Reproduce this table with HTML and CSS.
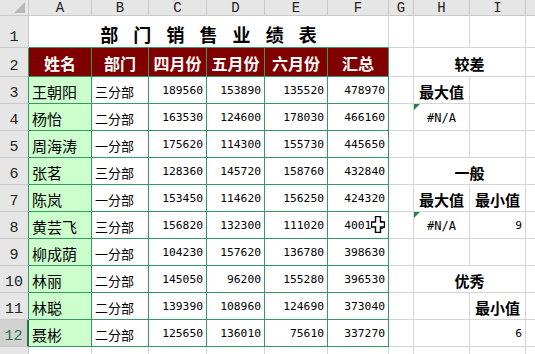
FILE: index.html
```html
<!DOCTYPE html>
<html lang="zh">
<head>
<meta charset="utf-8">
<title>部门销售业绩表</title>
<link rel="stylesheet" href="styles.css">
</head>
<body>
<div class="sheet">
  <div class="ch corner"></div>
  <div class="ch">A</div><div class="ch">B</div><div class="ch">C</div><div class="ch">D</div><div class="ch">E</div><div class="ch">F</div><div class="ch">G</div><div class="ch">H</div><div class="ch">I</div><div class="ch"></div>

  <div class="rh">1</div>
  <div class="c title">部 门 销 售 业 绩 表</div>
  <div class="c"></div><div class="c"></div><div class="c"></div><div class="c"></div>

  <div class="rh rg">2</div>
  <div class="c t hd">姓名</div><div class="c t hd">部门</div><div class="c t hd">四月份</div><div class="c t hd">五月份</div><div class="c t hd">六月份</div><div class="c t hd">汇总</div>
  <div class="c"></div><div class="c lbl span2">较差</div><div class="c"></div>

  <div class="rh rg">3</div>
  <div class="c t nm">王朝阳</div><div class="c t dp">三分部</div><div class="c t num">189560</div><div class="c t num">153890</div><div class="c t num">135520</div><div class="c t num">478970</div>
  <div class="c"></div><div class="c lbl">最大值</div><div class="c"></div><div class="c"></div>

  <div class="rh rg">4</div>
  <div class="c t nm">杨怡</div><div class="c t dp">二分部</div><div class="c t num">163530</div><div class="c t num">124600</div><div class="c t num">178030</div><div class="c t num">466160</div>
  <div class="c"></div><div class="c err">#N/A</div><div class="c"></div><div class="c"></div>

  <div class="rh rg">5</div>
  <div class="c t nm">周海涛</div><div class="c t dp">一分部</div><div class="c t num">175620</div><div class="c t num">114300</div><div class="c t num">155730</div><div class="c t num">445650</div>
  <div class="c"></div><div class="c"></div><div class="c"></div><div class="c"></div>

  <div class="rh rg">6</div>
  <div class="c t nm">张茗</div><div class="c t dp">三分部</div><div class="c t num">128360</div><div class="c t num">145720</div><div class="c t num">158760</div><div class="c t num">432840</div>
  <div class="c"></div><div class="c lbl span2">一般</div><div class="c"></div>

  <div class="rh rg">7</div>
  <div class="c t nm">陈岚</div><div class="c t dp">一分部</div><div class="c t num">153450</div><div class="c t num">114620</div><div class="c t num">156250</div><div class="c t num">424320</div>
  <div class="c"></div><div class="c lbl">最大值</div><div class="c lbl">最小值</div><div class="c"></div>

  <div class="rh rg">8</div>
  <div class="c t nm">黄芸飞</div><div class="c t dp">三分部</div><div class="c t num">156820</div><div class="c t num">132300</div><div class="c t num">111020</div><div class="c t num">400140</div>
  <div class="c"></div><div class="c err">#N/A</div><div class="c num">9</div><div class="c"></div>

  <div class="rh rg">9</div>
  <div class="c t nm">柳成荫</div><div class="c t dp">一分部</div><div class="c t num">104230</div><div class="c t num">157620</div><div class="c t num">136780</div><div class="c t num">398630</div>
  <div class="c"></div><div class="c"></div><div class="c"></div><div class="c"></div>

  <div class="rh rg">10</div>
  <div class="c t nm">林丽</div><div class="c t dp">二分部</div><div class="c t num">145050</div><div class="c t num">96200</div><div class="c t num">155280</div><div class="c t num">396530</div>
  <div class="c"></div><div class="c lbl span2">优秀</div><div class="c"></div>

  <div class="rh rg">11</div>
  <div class="c t nm">林聪</div><div class="c t dp">二分部</div><div class="c t num">139390</div><div class="c t num">108960</div><div class="c t num">124690</div><div class="c t num">373040</div>
  <div class="c"></div><div class="c"></div><div class="c lbl">最小值</div><div class="c"></div>

  <div class="rh rg active">12</div>
  <div class="c t nm">聂彬</div><div class="c t dp">二分部</div><div class="c t num">125650</div><div class="c t num">136010</div><div class="c t num">75610</div><div class="c t num">337270</div>
  <div class="c"></div><div class="c"></div><div class="c num">6</div><div class="c"></div>

  <div class="rh"></div>
  <div class="c"></div><div class="c"></div><div class="c"></div><div class="c"></div><div class="c"></div><div class="c"></div><div class="c"></div><div class="c"></div><div class="c"></div><div class="c"></div>

  <svg class="cursor" width="14" height="17" viewBox="0 0 14 17">
    <polygon points="4.5,0.5 9.5,0.5 9.5,6 13.5,6 13.5,11 9.5,11 9.5,16.5 4.5,16.5 4.5,11 0.5,11 0.5,6 4.5,6" fill="#fff" stroke="#000" stroke-width="1.4"/>
  </svg>
</div>
</body>
</html>
```
FILE: styles.css
```css
html, body {
  margin: 0;
  padding: 0;
  background: #fff;
  overflow: hidden;
}
.sheet {
  position: relative;
  display: grid;
  grid-template-columns: 29px 63px 57px 58px 58px 63px 61px 25px 56px 56px 56px;
  grid-template-rows: 16px 32px 29px repeat(11, 27px);
  width: 535px;
  height: 354px;
  overflow: hidden;
  font-family: "Noto Sans CJK SC", "Noto Sans", sans-serif;
  color: #000;
}
.sheet > div {
  box-sizing: border-box;
  display: flex;
  align-items: center;
  overflow: hidden;
  white-space: nowrap;
  min-width: 0;
}
.ch {
  background: #e6e6e6;
  border-right: 1px solid #c9c9c9;
  border-bottom: 1px solid #c9c9c9;
  justify-content: center;
  font-family: "Liberation Mono", monospace;
  font-size: 14px;
  color: #222;
  padding-top: 1px;
}
.corner {
  position: relative;
}
.corner::after {
  content: "";
  position: absolute;
  right: 3px;
  bottom: 2px;
  width: 0;
  height: 0;
  border-left: 11px solid transparent;
  border-bottom: 11px solid #b9b9b9;
}
.rh {
  background: #e6e6e6;
  border-right: 1px solid #c9c9c9;
  border-bottom: 1px solid #c9c9c9;
  justify-content: center;
  align-items: flex-end !important;
  padding-bottom: 1px;
  font-family: "Liberation Mono", monospace;
  font-size: 15px;
  color: #222;
}
.rh.rg {
  border-right-color: #339966;
}
.rh.active {
  background: #d2d2d2;
  color: #217346;
  border-right: 2px solid #217346;
}
.c {
  border-right: 1px solid #d4d4d4;
  border-bottom: 1px solid #d4d4d4;
  font-size: 13px;
}
.title {
  grid-column: span 6;
  justify-content: center;
  border-bottom-color: #339966;
  font-weight: 700;
  font-size: 18px;
  word-spacing: 11px;
  padding-top: 4px;
}
.t {
  border-right-color: #339966;
  border-bottom-color: #339966;
}
.hd {
  background: #800000;
  color: #fff;
  font-weight: 700;
  font-size: 16px;
  justify-content: center;
  padding-top: 2px;
}
.nm {
  background: #ccffcc;
  font-size: 15px;
  padding-left: 3px;
  padding-top: 3px;
}
.dp {
  font-size: 13px;
  padding-left: 3px;
  padding-top: 3px;
}
.num {
  justify-content: flex-end;
  padding-right: 3px;
  padding-top: 1px;
  font-family: "DejaVu Sans Mono", monospace;
  font-size: 11.3px;
}
.lbl {
  justify-content: center;
  font-weight: 700;
  font-size: 15px;
  padding-top: 2px;
}
.span2 {
  grid-column: span 2;
}
.err {
  position: relative;
  justify-content: center;
  font-family: "DejaVu Sans Mono", monospace;
  font-size: 12px;
  padding-top: 2px;
}
.err::before {
  content: "";
  position: absolute;
  left: 0;
  top: 0;
  width: 0;
  height: 0;
  border-top: 6px solid #1f8a32;
  border-right: 6px solid transparent;
}
.cursor {
  position: absolute;
  left: 371px;
  top: 216px;
}
```
